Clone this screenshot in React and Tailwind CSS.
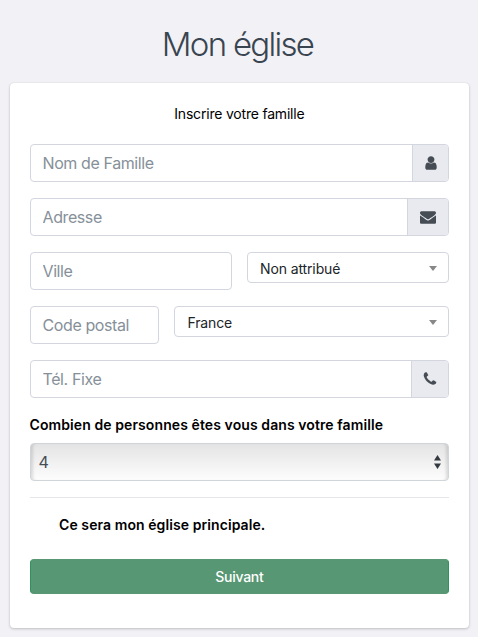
const USER =
  'M1536 1399q0 109-62.5 187t-150.5 78h-854q-88 0-150.5-78t-62.5-187q0-85 8.5-160.5t31.5-152 58.5-131 94-89 134.5-34.5q131 128 313 128t313-128q76 0 134.5 34.5t94 89 58.5 131 31.5 152 8.5 160.5zm-256-887q0 159-112.5 271.5t-271.5 112.5-271.5-112.5-112.5-271.5 112.5-271.5 271.5-112.5 271.5 112.5 112.5 271.5z';
const ENVELOPE =
  'M1792 710v794q0 66-47 113t-113 47h-1472q-66 0-113-47t-47-113v-794q44 49 101 87 362 246 497 345 57 42 92.5 65.5t94.5 48 110 24.5h2q51 0 110-24.5t94.5-48 92.5-65.5q170-123 498-345 57-39 100-87zm0-294q0 79-49 151t-122 123q-376 261-468 325-10 7-42.5 31t-54 38.5-52 32.5-57.5 27-50 9h-2q-23 0-50-9t-57.5-27-52-32.5-54-38.5-42.5-31q-91-64-262-182.5t-205-142.5q-62-42-117-115.5t-55-136.5q0-78 41.5-130t118.5-52h1472q65 0 112.5 47t47.5 113z';
const PHONE =
  'M1600 1240q0 27-10 70.5t-21 68.5q-21 50-122 106-94 51-186 51-27 0-53-3.5t-57.5-12.5-47-14.5-55.5-20.5-49-18q-98-35-175-83-127-79-264-216t-216-264q-48-77-83-175-3-9-18-49t-20.5-55.5-14.5-47-12.5-57.5-3.5-53q0-92 51-186 56-101 106-122 25-11 68.5-21t70.5-10q14 0 21 3 18 6 53 76 11 19 30 54t35 63.5 31 53.5q3 4 17.5 25t21.5 35.5 7 28.5q0 20-28.5 50t-62 55-62 53-28.5 46q0 9 5 22.5t8.5 20.5 14 24 11.5 19q76 137 174 235t235 174q2 1 19 11.5t24 14 20.5 8.5 22.5 5q18 0 46-28.5t53-62 55-62 50-28.5q14 0 28.5 7t35.5 21.5 25 17.5q25 15 53.5 31t63.5 35 54 30q70 35 76 53 3 7 3 21z';

function Field({ placeholder, icon, addonClass, className = '' }) {
  return (
    <div className={`flex h-[38px] overflow-hidden rounded border border-[#d3d6df] bg-white ${className}`}>
      <input
        placeholder={placeholder}
        className="min-w-0 flex-1 px-3 text-base tracking-[-0.025em] outline-none placeholder:text-[#869099]"
      />
      {icon && (
        <span className={`flex items-center justify-center border-l border-[#d3d6df] bg-[#e9eaef] ${addonClass}`}>
          <svg viewBox="0 0 1792 1792" className="size-4 fill-[#454c54]">
            <path d={icon} />
          </svg>
        </span>
      )}
    </div>
  );
}

function Select({ value, className = '' }) {
  return (
    <div className={`flex h-[31px] items-center justify-between rounded border border-[#d3d6df] bg-white pt-[2px] pr-[11px] pl-3 text-sm tracking-[-0.12px] text-[#212529] ${className}`}>
      <span>{value}</span>
      <svg viewBox="0 0 8 5" className="h-[5px] w-2 fill-[#888]">
        <path d="M0 0h8L4 5z" />
      </svg>
    </div>
  );
}

export default function App() {
  return (
    <div className="h-[637px] w-[478px] overflow-hidden bg-[#f2f1f6] font-['Inter',sans-serif]">
      <h1 className="flex h-[83px] items-center justify-center pt-[6px] pr-[3px] text-[33px] font-light tracking-[-0.052em] text-[#394550]">
        Mon église
      </h1>
      <main className="ml-[9.5px] flex h-[545px] w-[459.75px] flex-col rounded bg-white px-5 shadow-[0_0_1px_rgba(0,0,0,.13),0_1px_3px_rgba(0,0,0,.2)]">
        <p className="flex h-[61px] items-center justify-center pt-px text-sm tracking-[-0.2px] text-black">Inscrire votre famille</p>
        <div className="flex flex-col gap-4">
          <Field placeholder="Nom de Famille" icon={USER} addonClass="w-[36.5px]" />
          <Field placeholder="Adresse" icon={ENVELOPE} addonClass="w-[41px]" />
          <div className="flex items-start gap-[15px]">
            <Field placeholder="Ville" className="w-[202.5px]" />
            <Select value="Non attribué" className="flex-1" />
          </div>
          <div className="flex items-start gap-[15px]">
            <Field placeholder="Code postal" className="w-[129.9px]" />
            <Select value="France" className="flex-1" />
          </div>
          <Field placeholder="Tél. Fixe" icon={PHONE} addonClass="w-[37.5px]" />
        </div>
        <label className="flex h-[45px] items-center pt-2 text-sm font-semibold tracking-[0.09px] text-black">
          <span>Combien de personnes êtes vous dans votre famille</span>
        </label>
        <div className="flex h-[38px] shrink-0 items-center justify-between rounded border border-[#d0d5da] bg-linear-to-b from-[#e4e4e4] to-[#fdfdfd] pr-[7px] pl-[8px] text-base text-[#454c54] shadow-[inset_4px_0_3px_-2px_rgba(0,0,0,.12),inset_-4px_0_3px_-2px_rgba(0,0,0,.12)]">
          <span>4</span>
          <svg viewBox="0 0 7 14" className="h-[14px] w-[7px] fill-[#343a40]">
            <path d="M0 5.5h7L3.5 0zM0 8.5h7L3.5 14z" />
          </svg>
        </div>
        <hr className="mt-4 border-[#e6e6e8]" />
        <p className="flex h-[61px] items-center pb-[7px] pl-[29.5px] text-sm font-semibold tracking-[0.08px] text-black">
          Ce sera mon église principale.
        </p>
        <button className="flex h-[35px] shrink-0 items-center justify-center rounded border border-x-[#30935f] border-y-[#579773] bg-[#579773] text-sm font-medium tracking-[-0.25px] text-white">
          Suivant
        </button>
      </main>
    </div>
  );
}
